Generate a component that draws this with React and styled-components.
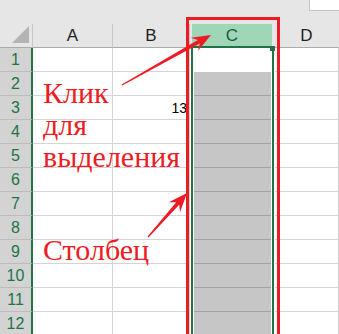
import React from 'react';
import styled, { createGlobalStyle } from 'styled-components';

const GREEN = '#217346';
const RED = '#ed1c24';
const GRID = '#d4d4d4';

const Global = createGlobalStyle`
  html, body { margin: 0; padding: 0; background: #fff; }
  body { overflow: hidden; }
`;

const Page = styled.div`
  position: relative;
  width: 339px;
  height: 334px;
  overflow: hidden;
  background: #fff;
`;

const TopBar = styled.div`
  height: 24px;
  background: #e6e6e6;
  display: flex;
  justify-content: flex-end;
  align-items: flex-start;
`;

const NameBox = styled.div`
  width: 29px;
  height: 10px;
  background: #fff;
  border-left: 1px solid #c6c6c6;
  border-bottom: 1px solid #c6c6c6;
`;

const Sheet = styled.div`
  display: grid;
  grid-template-columns: 33px 80px 77px 85px 1fr;
  grid-template-rows: 24px;
  grid-auto-rows: 24px;
  font-family: "Liberation Sans", Arial, sans-serif;
`;

const HeadBase = styled.div`
  box-sizing: border-box;
  background: #e6e6e6;
  border-bottom: 1px solid #ababab;
`;

const Corner = styled(HeadBase)`
  border-right: 1px solid #c8c8c8;
  display: flex;
  align-items: flex-end;
  justify-content: flex-end;
  padding: 0 3px 4px 0;
`;

const ColHead = styled(HeadBase)`
  display: flex;
  align-items: center;
  justify-content: center;
  border-right: 1px solid ${(p) => (p.$last ? 'transparent' : '#c8c8c8')};
  font-size: 17px;
  color: #1f1f1f;
  padding-top: 1px;
`;

const SelHead = styled.div`
  display: flex;
  flex-direction: column;
  background: #e6e6e6;
  padding-left: 1px;
`;

const SelHeadFace = styled.div`
  flex: 1;
  margin: 0 3px 0 1px;
  background: #a0d6b8;
  color: #22593e;
  font-size: 17px;
  display: flex;
  align-items: center;
  justify-content: center;
  padding-top: 1px;
`;

const SelHeadBar = styled.div`
  height: 2px;
  background: ${GREEN};
`;

const RowHead = styled.div`
  box-sizing: border-box;
  background: #d3d3d3;
  border-right: 2px solid ${GREEN};
  border-bottom: 1px solid #bcbcbc;
  color: ${GREEN};
  font-size: 16px;
  display: flex;
  align-items: center;
  justify-content: center;
  padding-top: 1px;
`;

const Cell = styled.div`
  box-sizing: border-box;
  border-right: 1px solid ${GRID};
  border-bottom: 1px solid ${GRID};
  display: flex;
  align-items: flex-end;
  justify-content: flex-end;
  padding: 0 2px 3px 0;
  font-size: 14px;
  color: #000;
`;

const SelCell = styled.div`
  box-sizing: border-box;
  padding: 0 1px;
  display: flex;
`;

const SelFrame = styled.div`
  flex: 1;
  display: flex;
  border-left: 2px solid ${GREEN};
  border-right: 2px solid ${GREEN};
  padding: 0 1px;
`;

const SelFill = styled.div`
  flex: 1;
  box-sizing: border-box;
  background: ${(p) => (p.$active ? '#fff' : '#c6c6c6')};
  border-bottom: 1px solid ${(p) => (p.$active ? '#fff' : '#a3a3a3')};
`;

const FillHandle = styled.div`
  position: absolute;
  left: 270px;
  top: 46px;
  width: 5px;
  height: 5px;
  background: ${GREEN};
`;

const RedFrame = styled.div`
  position: absolute;
  left: 186px;
  top: 17px;
  width: 94px;
  height: 340px;
  box-sizing: border-box;
  border: 3px solid ${RED};
`;

const Overlay = styled.svg`
  position: absolute;
  left: 0;
  top: 0;
  pointer-events: none;
`;

// Callout block placed over the sheet; the lines inside carry the type.
const Note = styled.div`
  position: absolute;
  left: ${(p) => p.$x}px;
  top: ${(p) => p.$y}px;
  white-space: nowrap;
`;

const NoteLine = styled.div`
  font-family: "Liberation Serif", "Times New Roman", serif;
  font-size: 30px;
  line-height: 32px;
  color: ${RED};
`;

// Tapered red pointer with a notched head, from (x1,y1) to its tip at (x2,y2).
function arrowPoints(x1, y1, x2, y2, head = 19, half = 7.5, w0 = 0.7, w1 = 2) {
  const dx = x2 - x1;
  const dy = y2 - y1;
  const L = Math.hypot(dx, dy);
  const ux = dx / L;
  const uy = dy / L;
  const px = -uy;
  const py = ux;
  const bx = x2 - ux * head;
  const by = y2 - uy * head;
  const nx = x2 - ux * (head - 5);
  const ny = y2 - uy * (head - 5);
  const pts = [
    [x1 + px * w0, y1 + py * w0],
    [nx + px * w1, ny + py * w1],
    [bx + px * half, by + py * half],
    [x2, y2],
    [bx - px * half, by - py * half],
    [nx - px * w1, ny - py * w1],
    [x1 - px * w0, y1 - py * w0],
  ];
  return pts.map(([a, b]) => `${a.toFixed(1)},${b.toFixed(1)}`).join(' ');
}

const COLS = ['A', 'B', 'C', 'D'];
const ROWS = Array.from({ length: 12 }, (_, i) => i + 1);

export default function App() {
  return (
    <>
      <Global />
      <Page>
        <TopBar>
          <NameBox />
        </TopBar>
        <Sheet>
          <Corner>
            <svg width="17" height="17" viewBox="0 0 17 17">
              <polygon points="17,0 17,17 0,17" fill="#b4b4b4" />
            </svg>
          </Corner>
          {COLS.map((c) =>
            c === 'C' ? (
              <SelHead key={c}>
                <SelHeadFace>{c}</SelHeadFace>
                <SelHeadBar />
              </SelHead>
            ) : (
              <ColHead key={c} $last={c === 'D'}>
                {c}
              </ColHead>
            )
          )}
          {ROWS.map((r) => (
            <React.Fragment key={r}>
              <RowHead>{r}</RowHead>
              <Cell />
              <Cell>{r === 3 ? '13' : null}</Cell>
              <SelCell>
                <SelFrame>
                  <SelFill $active={r === 1} />
                </SelFrame>
              </SelCell>
              <Cell />
            </React.Fragment>
          ))}
        </Sheet>
        <FillHandle />
        <RedFrame />
        <Note $x={43} $y={77}>
          <NoteLine>Клик</NoteLine>
          <NoteLine>для</NoteLine>
          <NoteLine>выделения</NoteLine>
        </Note>
        <Note $x={43} $y={234}>
          <NoteLine>Столбец</NoteLine>
        </Note>
        <Overlay width="339" height="334" viewBox="0 0 339 334">
          <polygon points={arrowPoints(122, 85, 211, 35)} fill={RED} />
          <polygon points={arrowPoints(148, 237, 187, 193)} fill={RED} />
        </Overlay>
      </Page>
    </>
  );
}
